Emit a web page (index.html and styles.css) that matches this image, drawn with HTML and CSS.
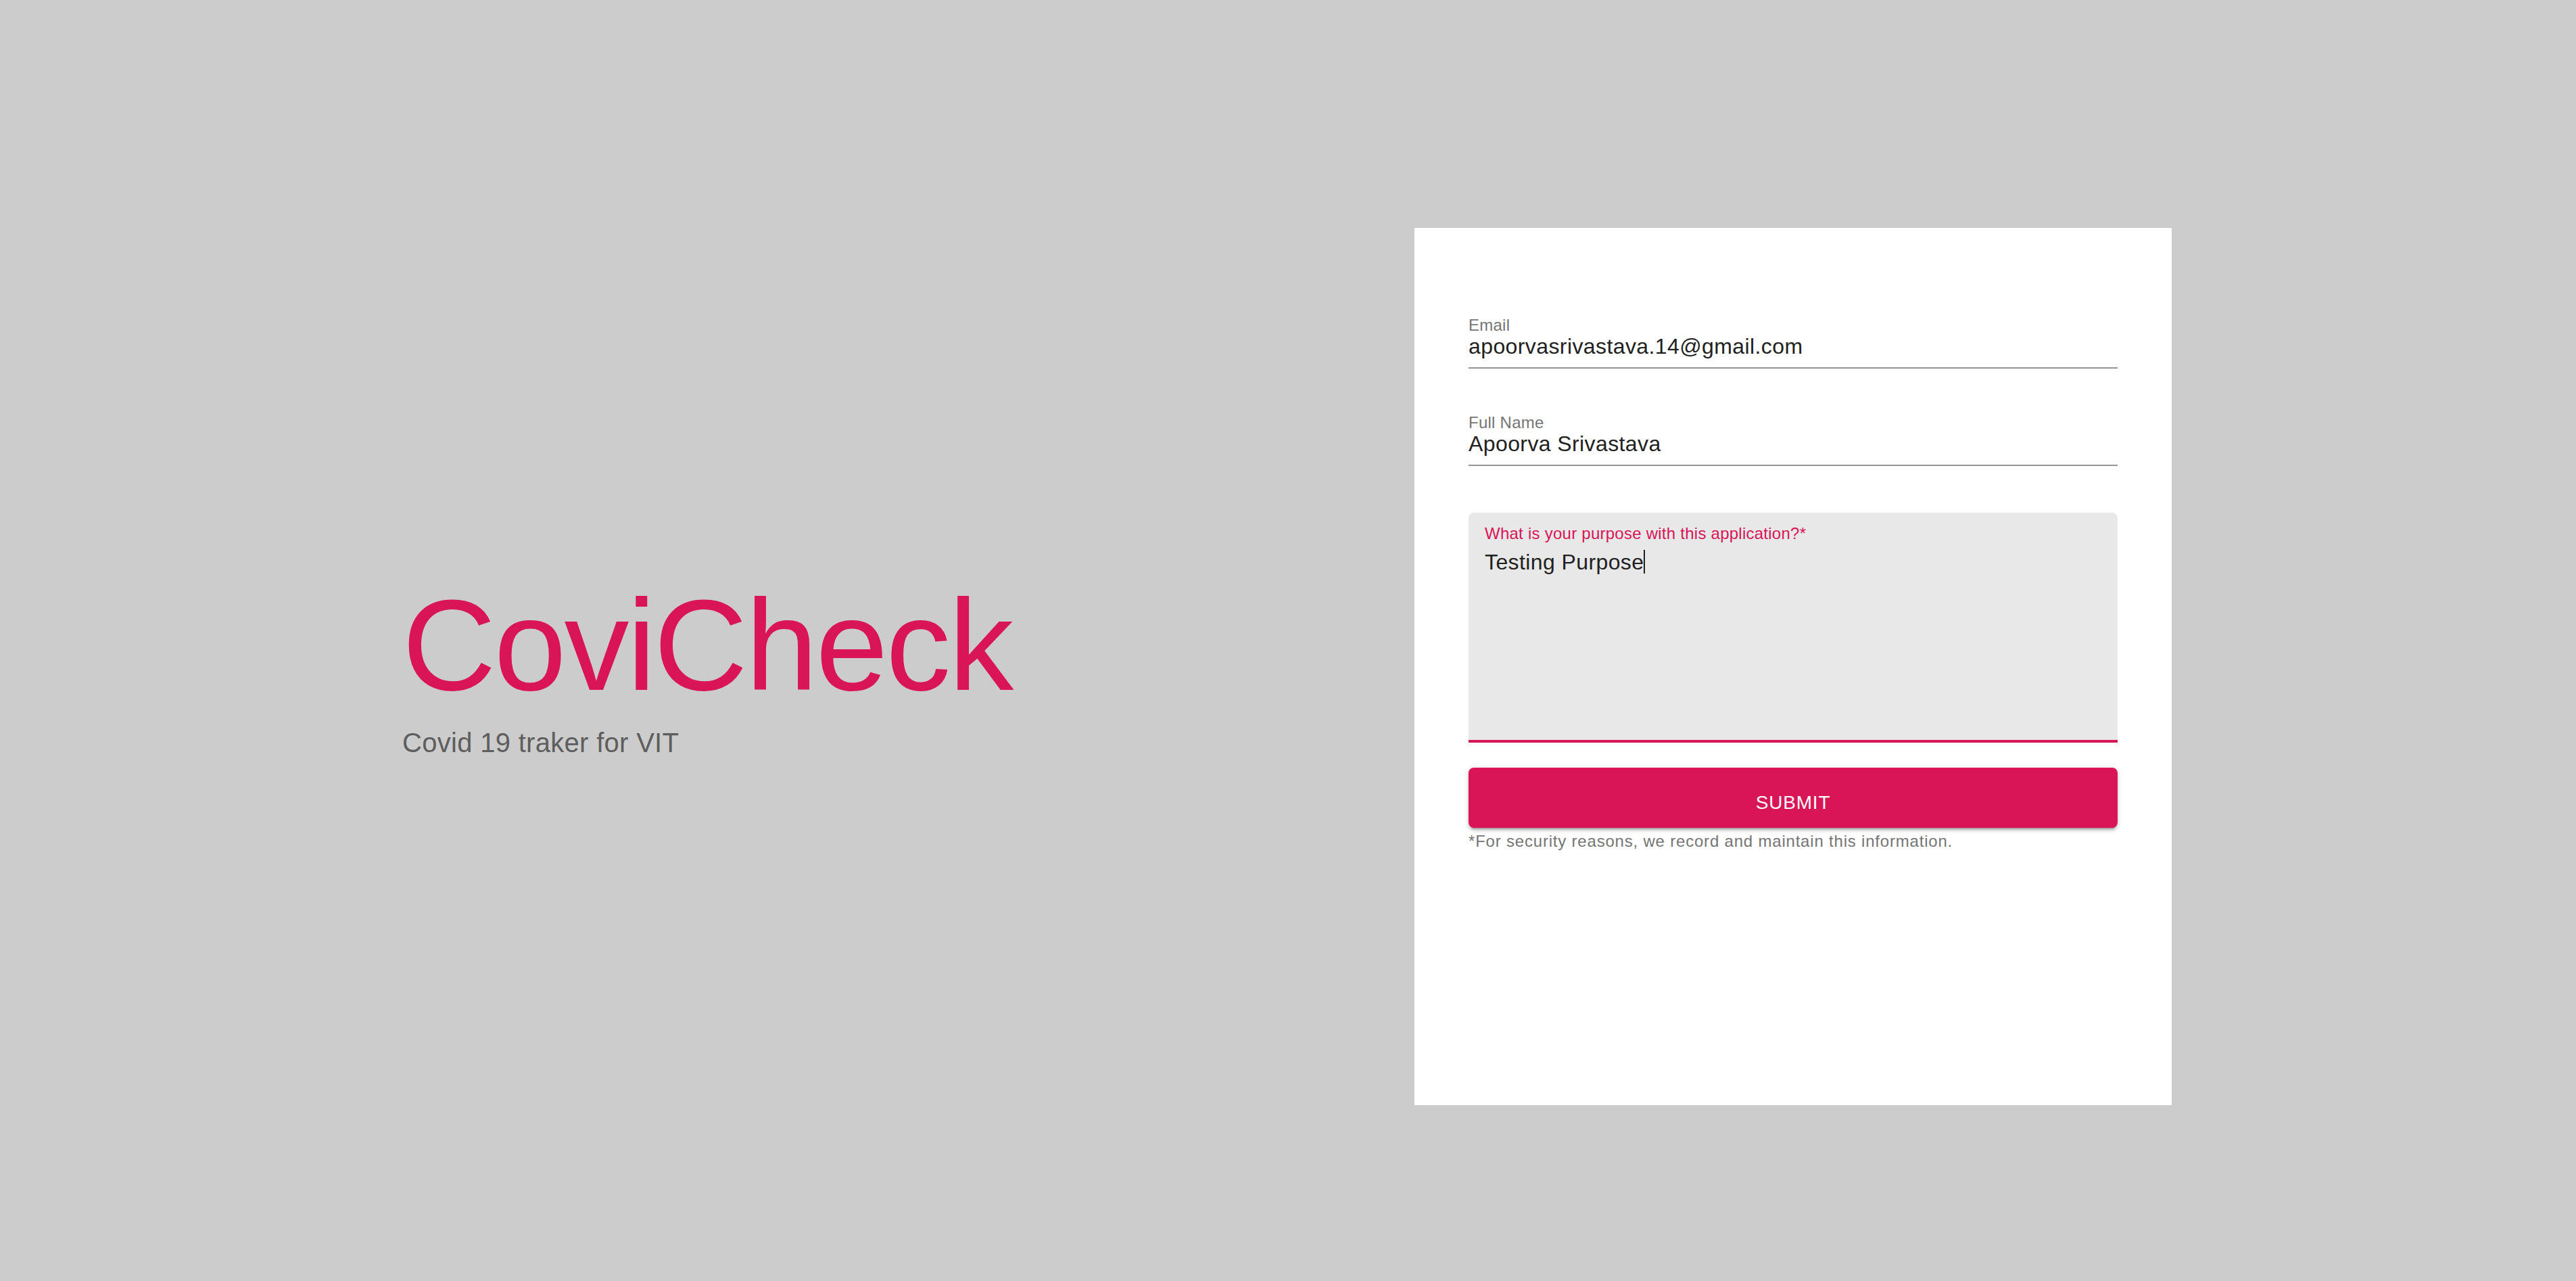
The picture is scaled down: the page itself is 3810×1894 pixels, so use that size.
FILE: index.html
```html
<!DOCTYPE html>
<html lang="en">
<head>
<meta charset="utf-8">
<title>CoviCheck</title>
<link rel="stylesheet" href="styles.css">
</head>
<body>
<main class="page">
  <section class="brand">
    <h1 class="brand-title">CoviCheck</h1>
    <p class="brand-sub">Covid 19 traker for VIT</p>
  </section>
  <section class="card">
    <form class="form">
      <div class="field">
        <label class="field-label" for="email">Email</label>
        <input class="field-input" id="email" type="text" value="apoorvasrivastava.14@gmail.com">
      </div>
      <div class="field">
        <label class="field-label" for="name">Full Name</label>
        <input class="field-input" id="name" type="text" value="Apoorva Srivastava">
      </div>
      <div class="area">
        <div class="area-label">What is your purpose with this application?*</div>
        <div class="area-text">Testing Purpose<span class="caret"></span></div>
      </div>
      <button class="submit" type="button">Submit</button>
      <p class="note">*For security reasons, we record and maintain this information.</p>
    </form>
  </section>
</main>
</body>
</html>
```
FILE: styles.css
```css
html, body {
  margin: 0;
  padding: 0;
  background: #cccccc;
  font-family: "Liberation Sans", Arial, sans-serif;
}

.page {
  box-sizing: border-box;
  height: 1894px;
  padding: 337px 0 0 595px;
  display: flex;
  align-items: flex-start;
}

.brand {
  width: 1497px;
  height: 1297px;
  display: flex;
  flex-direction: column;
  justify-content: center;
}

.brand-title {
  margin: 0;
  font-size: 192px;
  line-height: 224px;
  font-weight: 400;
  letter-spacing: -3px;
  color: #d91457;
}

.brand-sub {
  margin: 0;
  font-size: 40px;
  line-height: 64px;
  letter-spacing: 0.3px;
  color: #5e5e5e;
}

.card {
  box-sizing: border-box;
  width: 1120px;
  height: 1297px;
  background: #ffffff;
  padding: 132px 80px 0 80px;
}

.form {
  display: flex;
  flex-direction: column;
}

.field {
  display: flex;
  flex-direction: column;
  margin-bottom: 68px;
}

.field + .field {
  margin-bottom: 69px;
}

.field-label {
  font-size: 24px;
  line-height: 24px;
  letter-spacing: 0.25px;
  color: #757575;
}

.field-input {
  box-sizing: content-box;
  display: block;
  width: 100%;
  height: 38px;
  margin: 0;
  padding: 0 0 12px 0;
  border: 0;
  border-bottom: 2px solid #949494;
  background: transparent;
  font-family: "Liberation Sans", Arial, sans-serif;
  font-size: 32px;
  line-height: 38px;
  letter-spacing: 0.4px;
  color: #212121;
  outline: none;
}

.area {
  box-sizing: border-box;
  height: 340px;
  background: #e8e8e8;
  border-radius: 8px 8px 0 0;
  border-bottom: 4px solid #d91457;
  padding: 19px 24px 0 24px;
}

.area-label {
  font-size: 24px;
  line-height: 24px;
  letter-spacing: 0.25px;
  color: #d91457;
}

.area-text {
  margin-top: 11px;
  font-size: 32px;
  line-height: 38px;
  letter-spacing: 0.4px;
  color: #212121;
}

.caret {
  display: inline-block;
  width: 2px;
  height: 35px;
  background: #212121;
  vertical-align: -6px;
}

.submit {
  margin-top: 37px;
  height: 89px;
  padding: 14px 32px 0 32px;
  border: 0;
  border-radius: 8px;
  background: #d91457;
  color: #ffffff;
  font-family: "Liberation Sans", Arial, sans-serif;
  font-size: 28px;
  line-height: 49px;
  letter-spacing: 0.8px;
  text-transform: uppercase;
  box-shadow: 0 6px 2px -4px rgba(0,0,0,0.2), 0 4px 4px 0 rgba(0,0,0,0.14), 0 2px 10px 0 rgba(0,0,0,0.12);
}

.note {
  margin: 0;
  font-size: 24px;
  line-height: 40px;
  letter-spacing: 0.8px;
  color: #757575;
}
```
